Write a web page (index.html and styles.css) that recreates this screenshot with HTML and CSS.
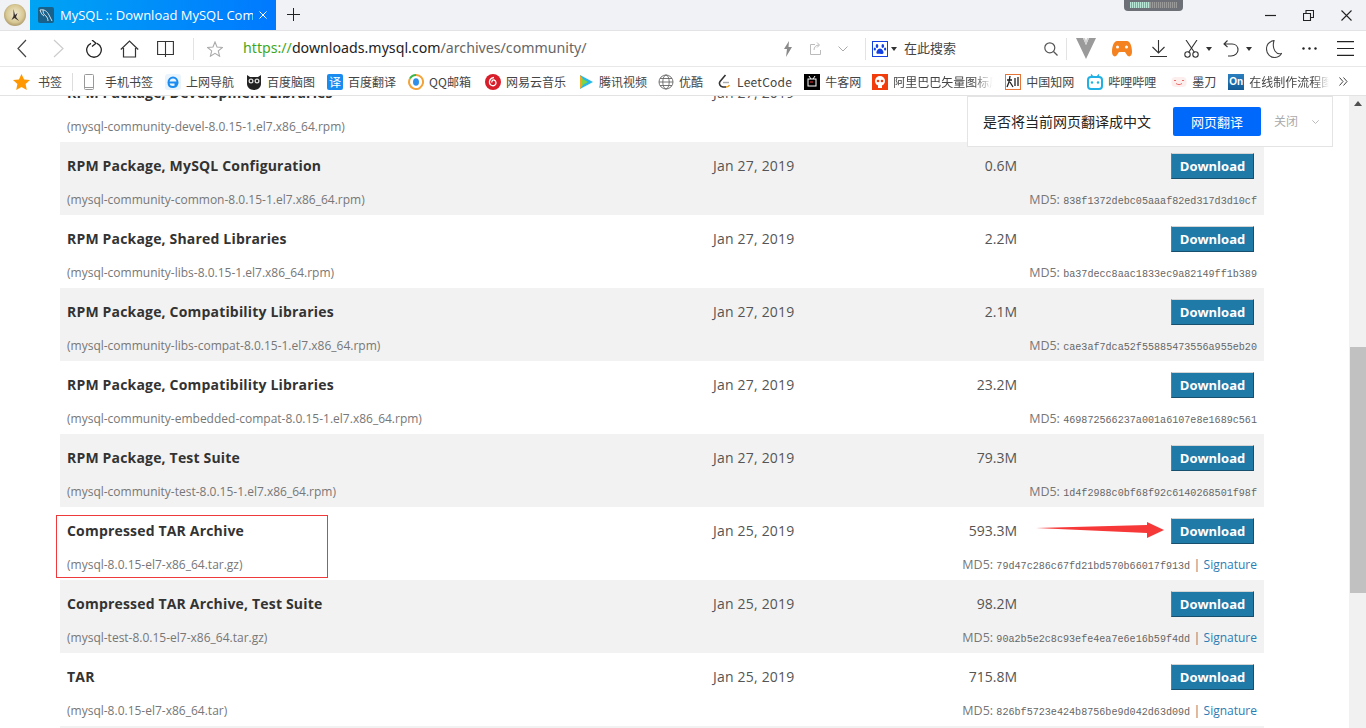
FILE: index.html
```html
<!DOCTYPE html>
<html lang="zh">
<head>
<meta charset="utf-8">
<title>MySQL :: Download MySQL Community Server (Archived Versions)</title>
<link rel="stylesheet" href="styles.css">
</head>
<body>
<div class="app">
  <header class="tabbar">
    <svg class="avatar" viewBox="0 0 22 22"><defs><radialGradient id="av" cx=".5" cy=".45" r=".6"><stop offset="0" stop-color="#f4ecd2"/><stop offset=".65" stop-color="#d8c894"/><stop offset="1" stop-color="#a08c60"/></radialGradient></defs><circle cx="11" cy="11" r="11" fill="url(#av)"/><path d="M9.500 5l1.500 6 2.500-2-1.500 4 3 4-4.500-3-3 2 2-4z" fill="#3b3030"/></svg>
    <div class="tab">
      <svg class="favicon" viewBox="0 0 16 16"><rect width="16" height="16" rx="2" fill="#17618a"/><path d="M2 3c4-1 7 1 9 5 1 2 2 4 3 6M5 3c0 3 1 5 3 6 1 1 2 3 2 5M2 3c1 3 2 5 4 6" fill="none" stroke="#fff" stroke-width=".8"/></svg>
      <span class="tab-title">MySQL :: Download MySQL Community Server</span>
      <svg class="tab-x" viewBox="0 0 8 8"><path d="M.5.5l7 7M7.5.5l-7 7" stroke="#fff" fill="none"/></svg>
    </div>
    <svg class="plus" viewBox="0 0 13 13"><path d="M6.5 0v13M0 6.5h13" stroke="#222" fill="none"/></svg>
    <div class="chip"><span class="chip-on"></span><span class="chip-off"></span></div>
    <div class="winctl">
      <svg class="win" viewBox="0 0 11 11"><path d="M0 5.5h11" stroke="#222" stroke-width="1.2"/></svg>
      <svg class="win" viewBox="0 0 11 11"><path d="M.5 3.5h7v7h-7zM3 3.5V.5h7.5v7h-3" fill="none" stroke="#222" stroke-width="1.1"/></svg>
      <svg class="win" viewBox="0 0 11 11"><path d="M.5.5l10 10M10.5.5l-10 10" fill="none" stroke="#222" stroke-width="1.1"/></svg>
    </div>
  </header>

  <nav class="toolbar">
    <svg class="t back" viewBox="0 0 10 19"><path d="M9 1L1 9.5 9 18" fill="none" stroke="#444" stroke-width="1.2"/></svg>
    <svg class="t forward" viewBox="0 0 11 19"><path d="M1 1l9 8.5L1 18" fill="none" stroke="#ccc" stroke-width="1.2"/></svg>
    <svg class="t reload" viewBox="0 0 16 18"><path d="M11 3.300A7.300 7.300 0 1 1 5 3.300" fill="none" stroke="#222" stroke-width="1.3"/><path d="M6 0l4 3.300-4 3.300" fill="none" stroke="#222" stroke-width="1.3"/></svg>
    <svg class="t home" viewBox="0 0 19 18"><path d="M.8 9.500L9.500 1l8.700 8.500M3.500 8v9h12V8" fill="none" stroke="#333" stroke-width="1.2"/></svg>
    <svg class="t book" viewBox="0 0 17 17"><path d="M.6 1.500h7.900v13H.6zM8.500 1.500h7.900v13H8.500zM8.500 14.500V17" fill="none" stroke="#333" stroke-width="1.1"/></svg>
    <span class="t sep sep-a"></span>
    <svg class="t star" viewBox="0 0 16 16"><path d="M8 1l2 5 5.500.4-4.200 3.500 1.300 5.300L8 12.300l-4.600 2.900 1.300-5.300L.5 6.400 6 6z" fill="none" stroke="#aaa" stroke-width="1.100"/></svg>
    <div class="url"><span class="u-green">https://</span><span class="u-host">downloads.mysql.com</span><span class="u-path">/archives/community/</span></div>
    <svg class="t bolt" viewBox="0 0 8 16"><path d="M5 0L0 8h3l-1 8 6-10H4.500z" fill="#8a8a8a"/></svg>
    <svg class="t share" viewBox="0 0 12 13"><path d="M5 2.500H.5v10h10V8M4 8c0-3 2-5 5-5M7 .5l2.500 2.500L7 5.500" fill="none" stroke="#bbb"/></svg>
    <svg class="t chev" viewBox="0 0 10 6"><path d="M.5.500L5 5 9.500.500" fill="none" stroke="#aaa"/></svg>
    <span class="t sep sep-b"></span>
    <svg class="t paw" viewBox="0 0 16 16"><rect x=".5" y=".5" width="15" height="15" fill="#fff" stroke="#1340e0"/><g fill="#1340e0"><ellipse cx="5" cy="5" rx="1.300" ry="2"/><ellipse cx="10.800" cy="5" rx="1.300" ry="2"/><ellipse cx="2.800" cy="8" rx="1.100" ry="1.500"/><ellipse cx="13.100" cy="8" rx="1.100" ry="1.500"/><path d="M8 7.500c2 0 4 3 3.500 4.500S9 13 8 12.700 5 13.500 4.500 12 6 7.500 8 7.500z"/></g></svg>
    <span class="t caret caret-paw"></span>
    <div class="search">在此搜索</div>
    <svg class="t find" viewBox="0 0 14 14"><circle cx="5.800" cy="5.800" r="5" fill="none" stroke="#555" stroke-width="1.200"/><path d="M9.500 9.500l4 4" stroke="#555" stroke-width="1.200"/></svg>
    <span class="t sep sep-c"></span>
    <svg class="t vee" viewBox="0 0 20 21"><path d="M0 0h7l3 7 3-7h7L10 21z" fill="#9a9a9a"/><path d="M7 0l3 7 3-7h-2L10 3 9 0z" fill="#cfcfcf"/></svg>
    <svg class="t game" viewBox="0 0 20 16"><path d="M5 0h10c3 0 5 5 5 11 0 4-3 6-5 3l-2-3H7l-2 3c-2 3-5 1-5-3C0 5 2 0 5 0z" fill="#f58220"/><circle cx="5.500" cy="6" r="1.500" fill="#fff"/><circle cx="14.500" cy="6" r="1.500" fill="#fff"/></svg>
    <svg class="t dl" viewBox="0 0 17 17"><path d="M8.500 0v12.500M2.500 7l6 6 6-6M0 16.500h17" fill="none" stroke="#333" stroke-width="1.100"/></svg>
    <svg class="t cut" viewBox="0 0 15 18"><path d="M2 0l8.500 12.500M13 0L4.500 12.500" fill="none" stroke="#333" stroke-width="1.100"/><circle cx="3.500" cy="14.500" r="2.700" fill="none" stroke="#333" stroke-width="1.100"/><circle cx="11.500" cy="14.500" r="2.700" fill="none" stroke="#333" stroke-width="1.100"/></svg>
    <span class="t caret caret-cut"></span>
    <svg class="t undo" viewBox="0 0 16 17"><path d="M1 4h8c4 0 6 3 6 6s-3 6-7 6H5M4.500.5L1 4l3.500 3" fill="none" stroke="#333" stroke-width="1.100"/></svg>
    <span class="t caret caret-undo"></span>
    <svg class="t moon" viewBox="0 0 16 18"><path d="M8 .5C3 1.500.5 5 .5 9c0 5 4 8.500 8 8.500 3 0 5.500-1.500 7-4-5 1.500-10-4-7.500-13z" fill="none" stroke="#444" stroke-width="1.100"/></svg>
    <svg class="t dots" viewBox="0 0 15 3"><circle cx="1.500" cy="1.500" r="1.200" fill="#222"/><circle cx="7.500" cy="1.500" r="1.200" fill="#222"/><circle cx="13.500" cy="1.500" r="1.200" fill="#222"/></svg>
    <svg class="t menu" viewBox="0 0 17 15"><path d="M0 .6h17M0 7.500h17M0 14.400h17" stroke="#222" stroke-width="1.100"/></svg>
  </nav>

  <nav class="bookmarks">
    <svg class="b-star" viewBox="0 0 17 16"><path d="M8.500 0l2.600 5.400 5.900.7-4.400 4 1.200 5.900-5.300-3-5.300 3 1.200-5.900L0 6.100l5.900-.7z" fill="#ff9800"/></svg>
    <span class="bm-label bm-first">书签</span>
    <span class="bm-sep"></span>
    <svg class="b-phone" viewBox="0 0 10 16"><rect x=".5" y=".5" width="9" height="15" rx="1" fill="none" stroke="#999"/><path d="M0 13.500h10" stroke="#999"/></svg>
    <span class="bm-label bm-gap">手机书签</span>
    <a class="bm"><svg class="ic" viewBox="0 0 16 16"><rect width="16" height="16" rx="3" fill="#eaf4fc"/><path d="M3.500 8.500h9C12.500 5.500 10.500 3.500 8 3.500S3.500 5.500 3.500 8.500s2 4.500 4.500 4.500c2 0 3.500-1 4-2.500H9.500" fill="none" stroke="#1a8cf0" stroke-width="2"/></svg>上网导航</a>
    <a class="bm"><svg class="ic" viewBox="0 0 16 16"><path d="M1 1l3 2h8l3-2v9c0 3-3 6-7 6s-7-3-7-6z" fill="#222"/><circle cx="5" cy="7" r="2.500" fill="#ddd"/><circle cx="11" cy="7" r="2.500" fill="#ddd"/><circle cx="5" cy="7" r="1.200" fill="#222"/><circle cx="11" cy="7" r="1.200" fill="#222"/></svg>百度脑图</a>
    <a class="bm"><span class="ic ic-yi">译</span>百度翻译</a>
    <a class="bm"><svg class="ic" viewBox="0 0 16 16"><path d="M8 1a7 7 0 1 1-6 3.500" fill="none" stroke="#f2a33a" stroke-width="2"/><path d="M2 4.500A7 7 0 0 1 8 1" fill="none" stroke="#39b54a" stroke-width="2"/><ellipse cx="8" cy="8" rx="3" ry="3.800" fill="#2f8fe8"/></svg>QQ邮箱</a>
    <a class="bm bm-wy"><svg class="ic" viewBox="0 0 16 16"><circle cx="8" cy="8" r="8" fill="#d81e2a"/><path d="M9 3.500C5.500 4 4 6.500 4.500 9c.5 2.500 3.500 3.500 5.500 2 1.800-1.500 1-4.500-1-5-1.500-.3-2.500 1-2 2.500" fill="none" stroke="#fff" stroke-width="1.300"/></svg>网易云音乐</a>
    <a class="bm"><svg class="ic" viewBox="0 0 16 16"><path d="M2 1l13 7-13 7z" fill="#23b8e8"/><path d="M2 1l5 7-5 7z" fill="#f5a623"/><path d="M4 4.500l6 3.500-6 3.500z" fill="#7ed348"/></svg>腾讯视频</a>
    <a class="bm bm-yk"><svg class="ic" viewBox="0 0 16 16"><g fill="none" stroke="#666" stroke-width=".9"><circle cx="8" cy="8" r="7"/><ellipse cx="8" cy="8" rx="3.200" ry="7"/><path d="M1 8h14M2 4.500h12M2 11.500h12"/></g></svg>优酷</a>
    <a class="bm bm-lc"><svg class="ic" viewBox="0 0 16 16"><path d="M9.500 1L4 7.500c-1.500 2 0 5 3 5.500h3" fill="none" stroke="#333" stroke-width="1.600"/><path d="M10 13c2 0 3-1 3.500-2" fill="none" stroke="#f0a020" stroke-width="1.600"/><path d="M7 8.500h6" stroke="#aaa" stroke-width="1.400"/></svg>LeetCode</a>
    <a class="bm"><svg class="ic" viewBox="0 0 16 16"><rect width="16" height="16" fill="#000"/><rect x="4" y="5" width="8" height="7" fill="none" stroke="#fff"/><path d="M5 2l2 3M11 2L9 5" stroke="#fff"/><path d="M6 8h3" stroke="#e33"/></svg>牛客网</a>
    <a class="bm bm-ali"><svg class="ic" viewBox="0 0 16 16"><rect width="16" height="16" fill="#f13c0c"/><circle cx="8" cy="7" r="5" fill="#fff"/><circle cx="6" cy="7" r="1.300" fill="#f13c0c"/><circle cx="10" cy="7" r="1.300" fill="#f13c0c"/><rect x="6" y="11" width="4" height="3" fill="#fff"/></svg><span class="bm-fade">阿里巴巴矢量图标库</span></a>
    <a class="bm"><svg class="ic" viewBox="0 0 16 16"><rect x=".5" y=".5" width="15" height="15" fill="#fff" stroke="#e5763a"/><path d="M5 2L4 8l-2 5M2 6h5M5 8l3 5M10 4v8M13 3v9" fill="none" stroke="#222" stroke-width="1.300"/></svg>中国知网</a>
    <a class="bm bm-bili"><svg class="ic" viewBox="0 0 16 16"><path d="M4 .5L6 3M12 .5L10 3" stroke="#20b0e3" stroke-width="1.300"/><rect x="1" y="3" width="14" height="12" rx="3" fill="none" stroke="#20b0e3" stroke-width="2"/><circle cx="5" cy="8.500" r="1.200" fill="#20b0e3"/><circle cx="11" cy="8.500" r="1.200" fill="#20b0e3"/></svg>哔哩哔哩</a>
    <a class="bm bm-mo"><svg class="ic" viewBox="0 0 16 16"><rect x=".5" y="3" width="15" height="10" rx="4" fill="#fdeeee"/><path d="M3 6.500h2M11 6.500h2M5 9.500c2 1.500 4 1.500 6 0" fill="none" stroke="#ee6a6a"/></svg>墨刀</a>
    <a class="bm"><span class="ic ic-on">On</span><span class="bm-fade bm-fade-on">在线制作流程图工具</span></a>
    <svg class="b-more" viewBox="0 0 9 9"><path d="M.5.500l3.500 4-3.500 4M4.500.500l3.500 4-3.500 4" fill="none" stroke="#444"/></svg>
  </nav>

  <div class="viewport">
    <main class="page">
      <div class="rows">
        <section class="row">
          <div class="line"><b class="name">RPM Package, Development Libraries</b><span class="date">Jan 27, 2019</span></div>
          <div class="line2"><span class="file">(mysql-community-devel-8.0.15-1.el7.x86_64.rpm)</span></div>
        </section>
        <section class="row alt">
          <div class="line"><b class="name">RPM Package, MySQL Configuration</b><span class="date">Jan 27, 2019</span><span class="size">0.6M</span><a class="dlbtn">Download</a></div>
          <div class="line2"><span class="file">(mysql-community-common-8.0.15-1.el7.x86_64.rpm)</span><span class="sum">MD5: <code>838f1372debc05aaaf82ed317d3d10cf</code></span></div>
        </section>
        <section class="row">
          <div class="line"><b class="name">RPM Package, Shared Libraries</b><span class="date">Jan 27, 2019</span><span class="size">2.2M</span><a class="dlbtn">Download</a></div>
          <div class="line2"><span class="file">(mysql-community-libs-8.0.15-1.el7.x86_64.rpm)</span><span class="sum">MD5: <code>ba37decc8aac1833ec9a82149ff1b389</code></span></div>
        </section>
        <section class="row alt">
          <div class="line"><b class="name">RPM Package, Compatibility Libraries</b><span class="date">Jan 27, 2019</span><span class="size">2.1M</span><a class="dlbtn">Download</a></div>
          <div class="line2"><span class="file">(mysql-community-libs-compat-8.0.15-1.el7.x86_64.rpm)</span><span class="sum">MD5: <code>cae3af7dca52f55885473556a955eb20</code></span></div>
        </section>
        <section class="row">
          <div class="line"><b class="name">RPM Package, Compatibility Libraries</b><span class="date">Jan 27, 2019</span><span class="size">23.2M</span><a class="dlbtn">Download</a></div>
          <div class="line2"><span class="file">(mysql-community-embedded-compat-8.0.15-1.el7.x86_64.rpm)</span><span class="sum">MD5: <code>469872566237a001a6107e8e1689c561</code></span></div>
        </section>
        <section class="row alt">
          <div class="line"><b class="name">RPM Package, Test Suite</b><span class="date">Jan 27, 2019</span><span class="size">79.3M</span><a class="dlbtn">Download</a></div>
          <div class="line2"><span class="file">(mysql-community-test-8.0.15-1.el7.x86_64.rpm)</span><span class="sum">MD5: <code>1d4f2988c0bf68f92c6140268501f98f</code></span></div>
        </section>
        <section class="row marked">
          <div class="line"><b class="name">Compressed TAR Archive</b><span class="date">Jan 25, 2019</span><span class="size">593.3M</span><a class="dlbtn">Download</a></div>
          <div class="line2"><span class="file">(mysql-8.0.15-el7-x86_64.tar.gz)</span><span class="sum">MD5: <code>79d47c286c67fd21bd570b66017f913d</code> | <a class="sig">Signature</a></span></div>
          <span class="redbox"></span>
          <svg class="redarrow" viewBox="0 0 128 16"><path d="M0 6l111-3V0l17 8-17 8v-5z" fill="#f73838"/></svg>
        </section>
        <section class="row alt">
          <div class="line"><b class="name">Compressed TAR Archive, Test Suite</b><span class="date">Jan 25, 2019</span><span class="size">98.2M</span><a class="dlbtn">Download</a></div>
          <div class="line2"><span class="file">(mysql-test-8.0.15-el7-x86_64.tar.gz)</span><span class="sum">MD5: <code>90a2b5e2c8c93efe4ea7e6e16b59f4dd</code> | <a class="sig">Signature</a></span></div>
        </section>
        <section class="row">
          <div class="line"><b class="name">TAR</b><span class="date">Jan 25, 2019</span><span class="size">715.8M</span><a class="dlbtn">Download</a></div>
          <div class="line2"><span class="file">(mysql-8.0.15-el7-x86_64.tar)</span><span class="sum">MD5: <code>826bf5723e424b8756be9d042d63d09d</code> | <a class="sig">Signature</a></span></div>
        </section>
        <section class="row alt"></section>
      </div>
    </main>
    <aside class="scrollbar">
      <span class="sb-up"></span>
      <span class="sb-thumb"></span>
    </aside>
    <div class="translate">
      <span class="tr-text">是否将当前网页翻译成中文</span>
      <button class="tr-btn">网页翻译</button>
      <span class="tr-close">关闭</span>
      <svg class="tr-chev" viewBox="0 0 7 4"><path d="M.3.300L3.500 3.500 6.700.300" fill="none" stroke="#bbb"/></svg>
    </div>
  </div>
</div>
</body>
</html>
```
FILE: styles.css
```css
* { box-sizing: border-box; }
html, body { margin: 0; padding: 0; height: 100%; overflow: hidden; background: #fff; }
body { font-family: "Noto Sans CJK SC", "Noto Sans", sans-serif; }
.app { width: 1366px; height: 728px; display: flex; flex-direction: column; overflow: hidden; position: relative; }

/* tab strip */
.tabbar { height: 30px; flex: none; background: #f1f2f5; display: flex; align-items: flex-start; position: relative; }
.avatar { width: 22px; height: 22px; margin: 4px 0 0 4px; flex: none; }
.tab { width: 246px; height: 30px; margin-left: 4px; display: flex; align-items: center; padding-left: 8px; background: linear-gradient(90deg, #00a4f4, #0079ff); flex: none; }
.favicon { width: 16px; height: 16px; flex: none; }
.tab-title { width: 193px; margin-left: 6px; color: #fff; font: 13px/30px "Open Sans", "Noto Sans", sans-serif; white-space: nowrap; overflow: hidden; }
.tab-x { width: 8px; height: 8px; margin-left: 6px; flex: none; }
.plus { width: 13px; height: 13px; margin: 8px 0 0 11px; flex: none; }
.chip { position: absolute; left: 1124px; top: 0; width: 59px; height: 11px; background: #6e7078; border-radius: 0 0 4px 4px; display: flex; padding: 2px 6px 3px; }
.chip-on { width: 20px; background: repeating-linear-gradient(90deg, #b9e8d8 0 1px, #7fa8a0 1px 2px); }
.chip-off { flex: 1; background: repeating-linear-gradient(90deg, #999 0 1px, #777 1px 2px); }
.winctl { margin-left: auto; display: flex; gap: 27px; padding: 10px 14px 0 0; }
.win { width: 11px; height: 11px; display: block; }

/* toolbar */
.toolbar { height: 36px; flex: none; display: flex; align-items: center; padding-left: 17px; background: #fff; border-top: 1px solid #e3e3e5; }
.t { flex: none; display: block; }
.back { width: 10px; height: 19px; }
.forward { width: 11px; height: 19px; margin-left: 26px; }
.reload { width: 16px; height: 18px; margin-left: 22px; }
.home { width: 19px; height: 18px; margin-left: 18px; }
.book { width: 17px; height: 17px; margin-left: 18px; }
.sep { width: 1px; height: 22px; background: #e3e3e3; }
.sep-a { margin-left: 19px; }
.star { width: 16px; height: 16px; margin-left: 13px; }
.url { width: 541px; margin-left: 20px; padding-bottom: 2px; font: 14.2px/22px "Noto Sans", sans-serif; white-space: nowrap; flex: none; }
.u-green { color: #3fa81e; }
.u-host { color: #222; }
.u-path { color: #666; }
.bolt { width: 8px; height: 16px; }
.share { width: 12px; height: 13px; margin-left: 18px; }
.chev { width: 10px; height: 6px; margin-left: 16px; }
.sep-b { margin-left: 17px; }
.paw { width: 16px; height: 16px; margin-left: 6px; }
.caret { width: 0; height: 0; border-left: 3px solid transparent; border-right: 3px solid transparent; border-top: 4px solid #333; }
.caret-paw { margin-left: 3px; }
.search { width: 140px; margin-left: 7px; padding-bottom: 2px; font-size: 13px; line-height: 20px; color: #444; flex: none; }
.find { width: 14px; height: 14px; }
.sep-c { margin-left: 8px; }
.vee { width: 20px; height: 21px; margin-left: 9px; }
.game { width: 20px; height: 16px; margin-left: 16px; }
.dl { width: 17px; height: 17px; margin-left: 18px; }
.cut { width: 15px; height: 18px; margin-left: 17px; }
.caret-cut { margin-left: 7px; }
.undo { width: 16px; height: 17px; margin-left: 11px; }
.caret-undo { margin-left: 7px; }
.moon { width: 16px; height: 18px; margin-left: 14px; }
.dots { width: 15px; height: 3px; margin-left: 20px; }
.menu { width: 17px; height: 15px; margin-left: 20px; }

/* bookmarks */
.bookmarks { height: 30px; flex: none; display: flex; align-items: center; padding: 1px 0 0 13px; background: #fff; border-top: 1px solid #e8e8e8; border-bottom: 1px solid #e3e3e3; font-size: 12px; color: #444; white-space: nowrap; position: relative; z-index: 2; }
.b-star { width: 17px; height: 16px; flex: none; }
.bm-label { flex: none; }
.bm-first { margin-left: 8px; }
.bm-sep { width: 1px; height: 18px; background: #ddd; margin-left: 10px; flex: none; }
.b-phone { width: 10px; height: 16px; margin-left: 11px; flex: none; }
.bm-gap { margin-left: 11px; }
.bm { display: flex; align-items: center; margin-left: 12px; flex: none; line-height: 16px; }
.bm-wy { margin-left: 14px; }
.bm-yk { margin-left: 11px; }
.bm-lc { margin-left: 13px; letter-spacing: .25px; }
.bm-ali { margin-left: 11px; }
.bm-bili { margin-left: 13px; }
.bm-mo { margin-left: 15px; }
.ic { width: 16px; height: 16px; flex: none; margin-right: 5px; display: block; }
.ic-yi { background: #1a8cf0; color: #fff; font-size: 12px; line-height: 16px; text-align: center; border-radius: 2px; }
.ic-on { background: linear-gradient(#2a7fc0, #135a94); color: #fff; font: 700 10px/16px "Liberation Sans", sans-serif; text-align: center; }
.bm-fade { width: 100px; overflow: hidden; -webkit-mask-image: linear-gradient(90deg, #000 80%, transparent); mask-image: linear-gradient(90deg, #000 80%, transparent); }
.bm-fade-on { width: 80px; }
.b-more { width: 9px; height: 9px; margin-left: 10px; flex: none; }

/* page */
.viewport { flex: 1; min-height: 0; display: flex; position: relative; background: #fff; }
.page { flex: 1; min-width: 0; overflow: hidden; padding-left: 60px; }
.rows { width: 1204px; margin-top: -27px; font-family: "Open Sans", sans-serif; }
.row { height: 73px; padding-top: 11px; position: relative; background: #fff; }
.row.alt { background: #f2f2f2; }
.line { display: flex; align-items: center; height: 26px; }
.name { width: 653px; padding: 0 0 2px 7px; font-size: 14px; font-weight: 700; letter-spacing: .18px; color: #333; flex: none; white-space: nowrap; }
.date { width: 100px; padding-bottom: 2px; font-size: 14px; letter-spacing: .2px; color: #555; flex: none; white-space: nowrap; }
.size { width: 204px; padding-bottom: 2px; font-size: 14px; color: #555; text-align: right; flex: none; }
.dlbtn { width: 83px; height: 26px; margin-left: 154px; flex: none; background: #1f7aa8; border: 1px solid #1f7aa8; border-top-color: #d5d5d5; border-left-color: #3a8cb6; border-right-color: #17506e; border-bottom-color: #17506e; color: #fff; font-size: 13px; font-weight: 700; line-height: 24px; text-align: center; }
.line2 { display: flex; justify-content: space-between; align-items: center; height: 20px; margin-top: 10px; padding: 0 7px; font-size: 12px; color: #777; white-space: nowrap; }
.file { color: #777; }
.sum { color: #777; font-size: 12.5px; }
.sum code { font: 10.1px/1 "Liberation Mono", monospace; color: #666; }
.sig { color: #2a7db4; font-size: 12px; }
.redbox { position: absolute; left: -4px; top: 8px; width: 272px; height: 63px; border: 1px solid #ee3a3a; }
.redarrow { position: absolute; left: 976px; top: 15px; width: 128px; height: 16px; }

/* scrollbar */
.scrollbar { width: 17px; flex: none; background: #f1f1f1; position: relative; }
.sb-up { position: absolute; left: 5px; top: 5px; width: 0; height: 0; border-left: 4px solid transparent; border-right: 4px solid transparent; border-bottom: 5px solid #505050; }
.sb-thumb { position: absolute; left: 1px; right: 0; top: 251px; height: 246px; background: #c1c1c1; }

/* translate prompt */
.translate { position: absolute; left: 967px; top: 0; width: 366px; height: 51px; background: #fff; border: 1px solid #e4e4e4; display: flex; align-items: center; padding-left: 15px; }
.tr-text { font-size: 14px; padding-bottom: 2px; color: #222; flex: none; width: 190px; white-space: nowrap; }
.tr-btn { width: 88px; height: 29px; padding: 0; border: 0; border-radius: 2px; background: #0068fa; color: #fff; font: 13px/29px "Noto Sans CJK SC", sans-serif; flex: none; }
.tr-close { margin-left: 13px; padding-bottom: 2px; font-size: 12px; color: #aaa; flex: none; }
.tr-chev { width: 7px; height: 4px; margin-left: 14px; flex: none; }
```
